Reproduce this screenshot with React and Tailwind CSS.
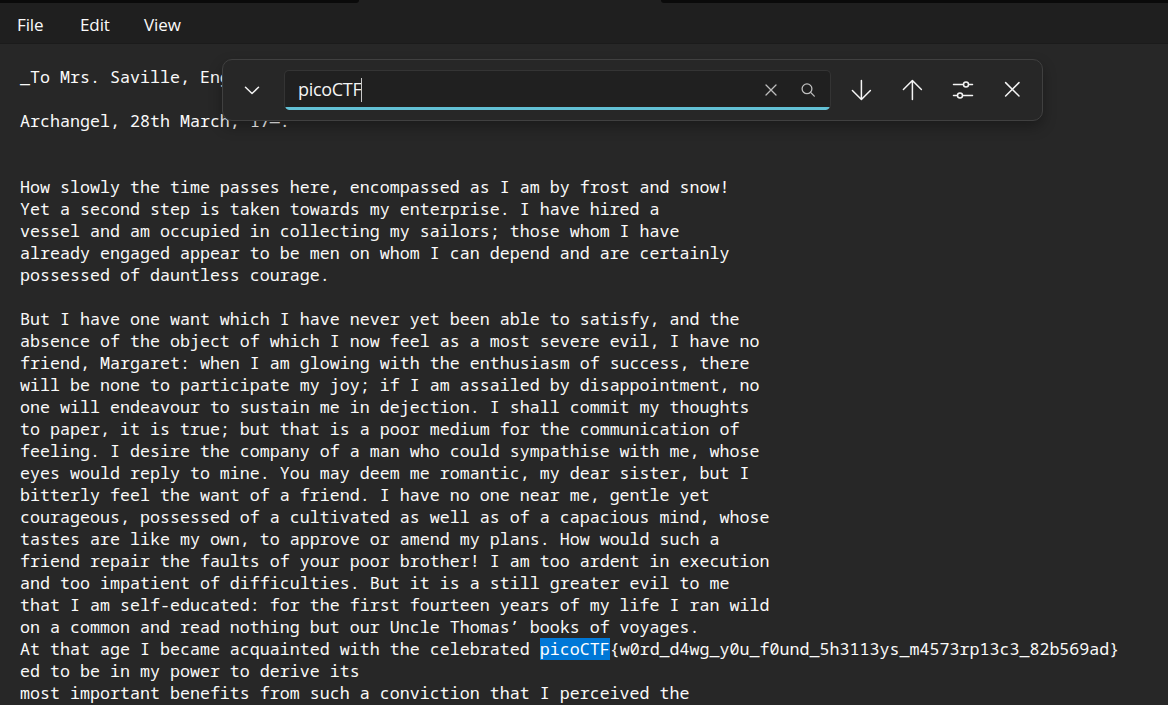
import React from "react";

const before = [
  "_To Mrs. Saville, England._",
  "",
  "Archangel, 28th March, 17—.",
  "",
  "",
  "How slowly the time passes here, encompassed as I am by frost and snow!",
  "Yet a second step is taken towards my enterprise. I have hired a",
  "vessel and am occupied in collecting my sailors; those whom I have",
  "already engaged appear to be men on whom I can depend and are certainly",
  "possessed of dauntless courage.",
  "",
  "But I have one want which I have never yet been able to satisfy, and the",
  "absence of the object of which I now feel as a most severe evil, I have no",
  "friend, Margaret: when I am glowing with the enthusiasm of success, there",
  "will be none to participate my joy; if I am assailed by disappointment, no",
  "one will endeavour to sustain me in dejection. I shall commit my thoughts",
  "to paper, it is true; but that is a poor medium for the communication of",
  "feeling. I desire the company of a man who could sympathise with me, whose",
  "eyes would reply to mine. You may deem me romantic, my dear sister, but I",
  "bitterly feel the want of a friend. I have no one near me, gentle yet",
  "courageous, possessed of a cultivated as well as of a capacious mind, whose",
  "tastes are like my own, to approve or amend my plans. How would such a",
  "friend repair the faults of your poor brother! I am too ardent in execution",
  "and too impatient of difficulties. But it is a still greater evil to me",
  "that I am self-educated: for the first fourteen years of my life I ran wild",
  "on a common and read nothing but our Uncle Thomas’ books of voyages.",
];
const after = [
  "ed to be in my power to derive its",
  "most important benefits from such a conviction that I perceived the",
];

function Line({ children }) {
  return <div className="h-[22px] shrink-0 leading-[21px] whitespace-pre">{children}</div>;
}

function Icon({ size, className, children, width = 1.5 }) {
  return (
    <svg
      width={size}
      height={size}
      viewBox={`0 0 ${size} ${size}`}
      fill="none"
      stroke="currentColor"
      strokeWidth={width}
      strokeLinecap="round"
      strokeLinejoin="round"
      className={`shrink-0 ${className || ""}`}
    >
      {children}
    </svg>
  );
}

function FindBar() {
  return (
    <div className="absolute left-[222px] top-[59px] flex h-[62px] w-[821px] items-center rounded-[10px] border border-[#404040] bg-[#272727] pl-[19px] text-[#f4f4f4] shadow-[0_6px_14px_rgba(0,0,0,0.3)]">
      <Icon size={20}>
        <path d="M3.5 7.3 L10 13.5 L16.5 7.3" />
      </Icon>
      <div className="relative ml-[22px] flex h-[40px] w-[547px] items-center overflow-hidden rounded-[5px] border border-b-0 border-[#343434] bg-[#202020] pb-px pl-[13px]">
        <span className="pb-[2px] text-[18px] leading-[24px] tracking-[-0.3px]">picoCTF</span>
        <span className="h-[24px] w-px bg-[#c8c8c8]" />
        <div className="ml-auto flex items-center gap-[17px] pr-[12px] text-[#bdbdbd]">
          <Icon size={20} width={1.3}>
            <path d="M5 5 L15 15 M15 5 L5 15" />
          </Icon>
          <Icon size={20} width={1.3}>
            <circle cx="9" cy="8.8" r="4.9" />
            <path d="M12.6 12.4 L16.3 16.1" />
          </Icon>
        </div>
        <div className="absolute inset-x-0 bottom-0 h-[3px] bg-[#62c0d4]" />
      </div>
      <Icon size={24} className="ml-[18px]">
        <path d="M12.4 2.5 V21.3 M3.4 12.5 L12.4 21.5 L21.4 12.5" />
      </Icon>
      <Icon size={24} className="ml-[27px]">
        <path d="M12.4 21.5 V2.7 M3.4 11.5 L12.4 2.5 L21.4 11.5" />
      </Icon>
      <Icon size={24} className="ml-[27px]">
        <path d="M2.5 6.5 H12.3 M17.7 6.5 H21.5 M2.5 17.5 H6.3 M11.7 17.5 H21.5" />
        <circle cx="15" cy="6.5" r="2.5" />
        <circle cx="9" cy="17.5" r="2.5" />
      </Icon>
      <Icon size={24} className="ml-[25px]">
        <path d="M5.6 4.6 L19 18 M19 4.6 L5.6 18" />
      </Icon>
    </div>
  );
}

export default function App() {
  return (
    <div className="relative flex h-[705px] w-[1168px] flex-col overflow-hidden bg-[#272727] font-['Open_Sans','Noto_Sans',sans-serif] text-white">
      <header className="flex h-[44px] shrink-0 flex-col border-b border-[#1b1b1b] bg-[#1f1f1f]">
        <div className="flex h-[3px] shrink-0 justify-between">
          <div className="w-[359px] rounded-br-[3px] bg-[#0a0a0a]" />
          <div className="w-[507px] rounded-bl-[3px] bg-[#0a0a0a]" />
        </div>
        <nav className="flex h-[40px] items-center pt-[4px] text-[17px] leading-[24px] tracking-[-0.1px] text-[#fafafa]">
          <span className="ml-[17px] w-[63px]">File</span>
          <span className="w-[64px]">Edit</span>
          <span>View</span>
        </nav>
      </header>
      <main className="flex flex-col pl-[20px] pt-[22px] font-['Noto_Sans_Mono','Liberation_Mono',monospace] text-[16.672px] text-[#fafafa]">
        {before.map((t, i) => (
          <Line key={i}>{t}</Line>
        ))}
        <Line>
          At that age I became acquainted with the celebrated{" "}
          <span className="inline-block h-[22px] bg-[#0078d7] text-white">picoCTF</span>
          {"{w0rd_d4wg_y0u_f0und_5h3113ys_m4573rp13c3_82b569ad}"}
        </Line>
        {after.map((t, i) => (
          <Line key={i}>{t}</Line>
        ))}
      </main>
      <FindBar />
    </div>
  );
}
